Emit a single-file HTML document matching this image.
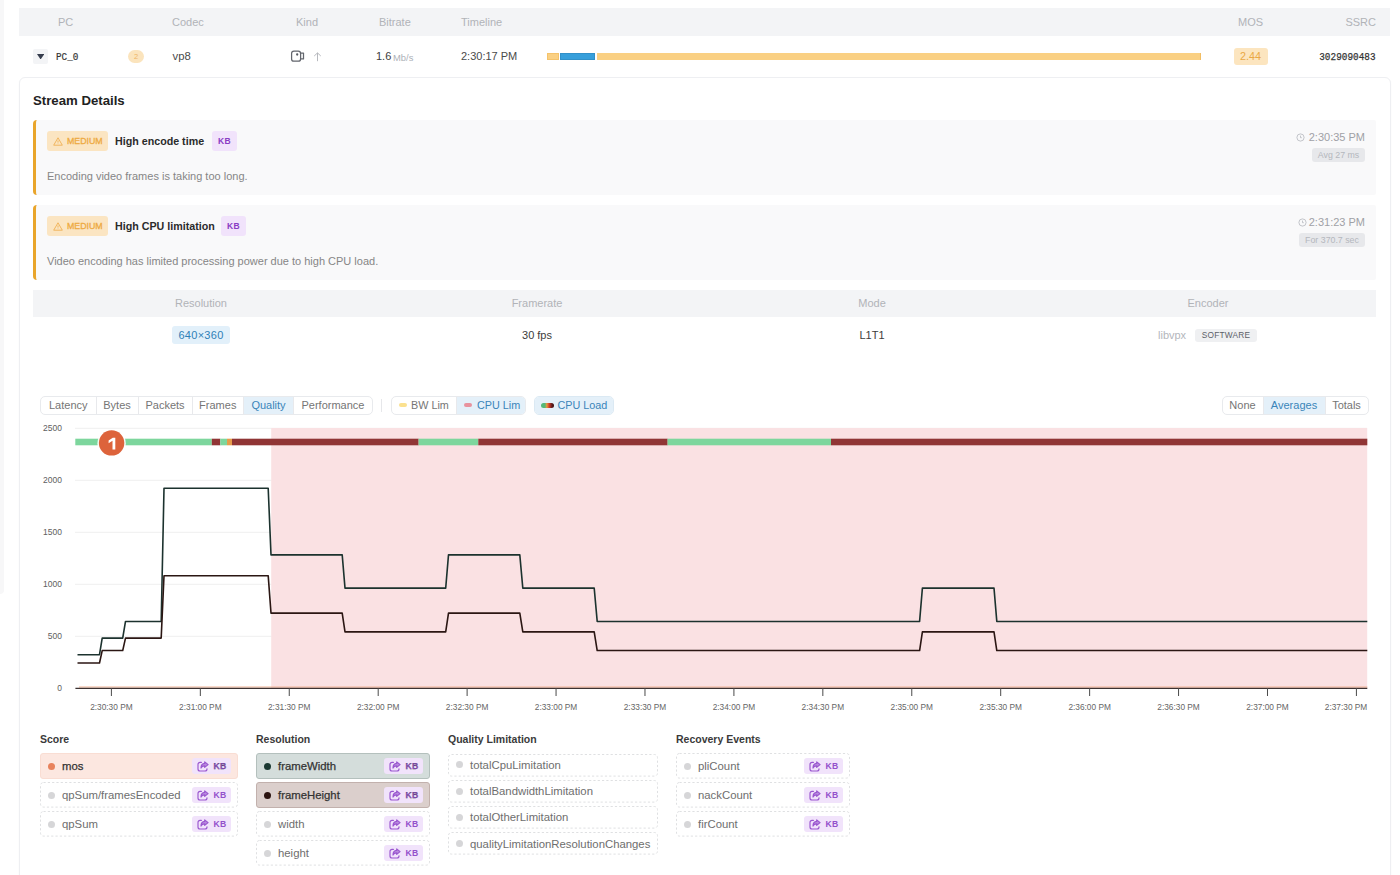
<!DOCTYPE html>
<html>
<head>
<meta charset="utf-8">
<title>Stream Details</title>
<style>
*{box-sizing:border-box;margin:0;padding:0}
html,body{width:1400px;height:875px;overflow:hidden;background:#fff}
body{font-family:"Liberation Sans",sans-serif;position:relative;color:#333;font-size:11px}
.abs{position:absolute}
.t{position:absolute;white-space:nowrap;line-height:1}
.mono{font-family:"Liberation Mono",monospace}
#strip{left:0;top:0;width:4px;height:594px;background:#f7f7f8;border-radius:0 0 4px 0}
#hdr{left:19px;top:8px;width:1371px;height:28px;background:#f3f4f6}
.hl{color:#b1b3b8;font-size:11px}
#card{left:19px;top:77px;width:1372px;height:820px;border:1px solid #eeeff2;border-radius:6px;background:#fff;box-shadow:0 1px 2px rgba(0,0,0,.03)}
.alert{left:33px;width:1343px;height:75px;background:#f9f9fa;border-left:3.5px solid #e9a52b;border-radius:4px 2px 2px 4px}
.badge{position:absolute;border-radius:3px;white-space:nowrap}
.med{background:#fbe5c2;color:#eda63a;font-size:9px;height:20.5px;width:61px}
.kb{background:#f1e3fb;color:#8a3cc4;font-weight:bold;font-size:8.5px;letter-spacing:.3px;text-align:center}
.tbl-h{left:33px;top:290px;width:1343px;height:27px;background:#f3f4f6}
.grp{position:absolute;height:18.6px;border:1px solid #e8eaed;border-radius:5px;background:#fff;overflow:hidden}
.grp span{position:absolute;top:0;height:17px;line-height:16.6px;font-size:11px;color:#757575;text-align:center;border-left:1px solid #e8e9ec}
.grp span:first-child{border-left:none}
.grp span.on{background:#e4f0f9;color:#3a85b9}
.li{position:absolute;border:1px solid transparent;border-radius:3px;height:25.6px;font-size:11.35px;color:#6e6e6e}
.li.s{height:22.6px}
.li .bd{position:absolute;left:-1px;top:-1px;width:calc(100% + 2px);height:calc(100% + 2px);overflow:visible}
.li .d{position:absolute;left:7.3px;top:8.3px;width:7px;height:7px;border-radius:50%;background:#d6d6d8}
.li.s .d{top:6.9px}
.li .n{position:absolute;left:21px;top:.9px;line-height:23.8px;white-space:nowrap}
.li.s .n{top:.6px;line-height:20.4px}
.li .kb{position:absolute;right:5.9px;top:3.8px;width:39px;height:16px;line-height:16px;border-radius:3px;padding-left:21.5px;text-align:left;font-size:8.6px;letter-spacing:.2px;color:#9450cb}
.li .kb svg{position:absolute;left:5px;top:2.8px}
.lh{position:absolute;font-weight:bold;font-size:10.5px;color:#3a3a3a;white-space:nowrap;line-height:1}
.ax{font-family:"Liberation Sans",sans-serif;font-size:9px;fill:#666}
.ay{font-family:"Liberation Sans",sans-serif;font-size:8.5px;fill:#606060}
.mk{font-family:"Liberation Sans",sans-serif;font-weight:bold;font-size:16.5px;fill:#fff}
</style>
</head>
<body>
<div id="strip" class="abs"></div>
<div id="hdr" class="abs"></div>
<!-- header labels -->
<div class="t hl" style="left:58px;top:17px">PC</div>
<div class="t hl" style="left:172px;top:17px">Codec</div>
<div class="t hl" style="left:296px;top:17px">Kind</div>
<div class="t hl" style="left:379px;top:17px">Bitrate</div>
<div class="t hl" style="left:461px;top:17px">Timeline</div>
<div class="t hl" style="left:1238px;top:17px">MOS</div>
<div class="t hl" style="right:24px;top:17px">SSRC</div>
<!-- row -->
<div class="abs" style="left:32.5px;top:48.5px;width:15px;height:15px;background:#f3f4f6;border-radius:2px"></div>
<svg class="abs" style="left:37.3px;top:53.8px" width="7.2" height="5.6" viewBox="0 0 8 6"><path d="M0 0H8L4 6Z" fill="#363d4d"/></svg>
<div class="t mono" style="left:55.5px;top:52.2px;font-size:11px;color:#333;-webkit-text-stroke:.2px #333;transform:scaleX(.85);transform-origin:0 0">PC_0</div>
<div class="abs" style="left:128px;top:49.5px;width:16px;height:13px;border-radius:6.5px;background:#fbe4bd;color:#eeb465;font-size:7.5px;text-align:center;line-height:13px">2</div>
<div class="t" style="left:172.5px;top:51.4px;font-size:11.3px;color:#4a4a4a">vp8</div>
<svg class="abs" style="left:290px;top:50.1px" width="15" height="12" viewBox="0 0 15 12" fill="none" stroke="#63666d" stroke-width="1.25"><rect x="1.6" y="1.2" width="9" height="10" rx="2.3"/><path d="M10.6 3.1H13.5V8.9H10.6" stroke-linejoin="round"/><circle cx="7.2" cy="4.5" r="1.15" fill="#55585f" stroke="none"/></svg>
<svg class="abs" style="left:313px;top:51.8px" width="9" height="10" viewBox="0 0 9 10" fill="none" stroke="#b7b9be" stroke-width="1"><path d="M4.5 9.2V.9M1.2 4L4.5 .9L7.8 4"/></svg>
<div class="t" style="left:376px;top:51px;font-size:11px;color:#3c3c3c">1.6</div>
<div class="t" style="left:393px;top:52.5px;font-size:9.4px;color:#adb1b8">Mb/s</div>
<div class="t" style="left:461px;top:51px;font-size:11px;color:#4a4a4a">2:30:17 PM</div>
<!-- timeline bar -->
<div class="abs" style="left:546.8px;top:52.9px;width:654.5px;height:6.8px;background:#fad083"></div>
<div class="abs" style="left:546.8px;top:52.9px;width:12.4px;height:6.8px;background:#fad083;border:1px solid #f4c36c"></div>
<div class="abs" style="left:1199.8px;top:52.9px;width:1.5px;height:6.8px;background:#f2bd62"></div>
<div class="abs" style="left:559.2px;top:52.4px;width:38px;height:7.8px;background:#fff"></div>
<div class="abs" style="left:560px;top:52.9px;width:35px;height:6.8px;background:#379fdb;border:1px solid #3290c8"></div>
<!-- MOS -->
<div class="abs" style="left:1233.5px;top:47.7px;width:34px;height:17px;border-radius:3px;background:#fce5bf;color:#eaa845;font-size:10.8px;text-align:center;line-height:17px">2.44</div>
<div class="t mono" style="right:24px;top:50.8px;font-size:11.6px;color:#333;-webkit-text-stroke:.25px #333;transform:scaleX(.81);transform-origin:100% 0">3029090483</div>
<div id="card" class="abs"></div>
<div class="t" style="left:33px;top:94px;font-size:13.2px;font-weight:bold;color:#222">Stream Details</div>
<!-- alert 1 -->
<div class="abs alert" style="top:120px"></div>
<div class="badge med" style="left:47px;top:130.7px"></div>
<svg class="abs" style="left:52.5px;top:136.7px" width="10" height="9" viewBox="0 0 10 9" fill="none" stroke="#efb052" stroke-width=".9"><path d="M5 .8L9.3 8.2H.7Z" stroke-linejoin="round"/><path d="M5 3.4V5.6M5 6.6V7"/></svg>
<div class="t" style="left:67px;top:137.3px;font-size:8.8px;color:#eeaa42;-webkit-text-stroke:.3px #eeaa42">MEDIUM</div>
<div class="t" style="left:115px;top:135.8px;font-size:10.7px;font-weight:bold;color:#2b2b2b">High encode time</div>
<div class="badge kb" style="left:212px;top:130.7px;width:25px;height:20.5px;line-height:20.5px">KB</div>
<div class="t" style="left:47px;top:171px;font-size:11px;color:#868686">Encoding video frames is taking too long.</div>
<svg class="abs" style="left:1296px;top:132.8px" width="9" height="9" viewBox="0 0 9 9" fill="none" stroke="#b5b8be" stroke-width=".8"><circle cx="4.5" cy="4.5" r="3.6"/><path d="M4.5 2.6V4.7H5.8"/></svg>
<div class="t" style="right:35px;top:131.8px;font-size:11px;color:#9fa1a6">2:30:35 PM</div>
<div class="badge" style="left:1312px;top:148px;width:53px;height:14px;background:#e7e8eb;color:#b4b7bd;font-size:8.8px;line-height:14px;text-align:center">Avg 27 ms</div>
<!-- alert 2 -->
<div class="abs alert" style="top:205px"></div>
<div class="badge med" style="left:47px;top:215.7px"></div>
<svg class="abs" style="left:52.5px;top:221.7px" width="10" height="9" viewBox="0 0 10 9" fill="none" stroke="#efb052" stroke-width=".9"><path d="M5 .8L9.3 8.2H.7Z" stroke-linejoin="round"/><path d="M5 3.4V5.6M5 6.6V7"/></svg>
<div class="t" style="left:67px;top:222.3px;font-size:8.8px;color:#eeaa42;-webkit-text-stroke:.3px #eeaa42">MEDIUM</div>
<div class="t" style="left:115px;top:220.8px;font-size:10.7px;font-weight:bold;color:#2b2b2b">High CPU limitation</div>
<div class="badge kb" style="left:221px;top:215.7px;width:25px;height:20.5px;line-height:20.5px">KB</div>
<div class="t" style="left:47px;top:256px;font-size:11px;color:#868686">Video encoding has limited processing power due to high CPU load.</div>
<svg class="abs" style="left:1298px;top:217.8px" width="9" height="9" viewBox="0 0 9 9" fill="none" stroke="#b5b8be" stroke-width=".8"><circle cx="4.5" cy="4.5" r="3.6"/><path d="M4.5 2.6V4.7H5.8"/></svg>
<div class="t" style="right:35px;top:216.8px;font-size:11px;color:#9fa1a6">2:31:23 PM</div>
<div class="badge" style="left:1299px;top:233px;width:66px;height:14px;background:#e7e8eb;color:#b4b7bd;font-size:8.8px;line-height:14px;text-align:center">For 370.7 sec</div>
<!-- table -->
<div class="abs tbl-h"></div>
<div class="t hl" style="left:33px;width:336px;text-align:center;top:298px">Resolution</div>
<div class="t hl" style="left:369px;width:336px;text-align:center;top:298px">Framerate</div>
<div class="t hl" style="left:704px;width:336px;text-align:center;top:298px">Mode</div>
<div class="t hl" style="left:1040px;width:336px;text-align:center;top:298px">Encoder</div>
<div class="badge" style="left:172px;top:326px;width:58px;height:18px;background:#e2f0fa;color:#2f80b7;font-size:11px;line-height:18px;text-align:center;letter-spacing:.3px">640×360</div>
<div class="t" style="left:369px;width:336px;text-align:center;top:330px;font-size:11px;color:#3c3c3c">30 fps</div>
<div class="t" style="left:704px;width:336px;text-align:center;top:330px;font-size:11px;color:#3c3c3c">L1T1</div>
<div class="t" style="left:1158px;top:330px;font-size:11px;color:#b3b6bc">libvpx</div>
<div class="badge" style="left:1195px;top:329px;width:62px;height:13px;background:#eff0f2;color:#5c6068;font-size:8.3px;line-height:13px;text-align:center;letter-spacing:.2px">SOFTWARE</div>
<!-- toolbar -->
<div class="grp" style="left:40px;top:396px;width:333px">
<span style="left:0;width:54.5px">Latency</span><span style="left:54.5px;width:42px">Bytes</span><span style="left:96.5px;width:54px">Packets</span><span style="left:150.5px;width:51.5px">Frames</span><span class="on" style="left:202px;width:50px">Quality</span><span style="left:252px;width:79px">Performance</span>
</div>
<div class="abs" style="left:381px;top:399px;width:1px;height:13px;background:#e6e7ea"></div>
<div class="grp" style="left:391px;top:396px;font-size:10.8px;width:135px">
<span style="left:0;width:64px;text-align:left;padding-left:19px;font-size:10.8px">BW Lim</span><span class="on" style="left:64px;width:69px;text-align:left;padding-left:20px;font-size:10.8px">CPU Lim</span>
</div>
<div class="abs" style="left:399px;top:403.2px;width:8px;height:4px;border-radius:2px;background:#fbe18f"></div>
<div class="abs" style="left:464px;top:403.2px;width:8px;height:4px;border-radius:2px;background:#e8929e"></div>
<div class="grp" style="left:534px;top:396px;width:80px;border-color:#dbe9f3">
<span class="on" style="left:0;width:78px;text-align:left;padding-left:22.5px;font-size:10.8px">CPU Load</span>
</div>
<div class="abs" style="left:541px;top:402.8px;width:12.5px;height:5px;border-radius:2.5px;background:linear-gradient(90deg,#55b97a 0%,#55b97a 30%,#e89a3c 45%,#d6402f 62%,#5a1a1a 85%,#3a1212 100%)"></div>
<div class="grp" style="left:1221.5px;top:396px;width:147px">
<span style="left:0;width:40px">None</span><span class="on" style="left:40px;width:62px">Averages</span><span style="left:102px;width:43px">Totals</span>
</div>
<!--CHART-START-->
<svg class="abs" style="left:0;top:420px" width="1400" height="300" viewBox="0 420 1400 300">
<line x1="75" x2="1367" y1="428.3" y2="428.3" stroke="#efefef" stroke-width="1"/>
<line x1="75" x2="1367" y1="480.3" y2="480.3" stroke="#efefef" stroke-width="1"/>
<line x1="75" x2="1367" y1="532.3" y2="532.3" stroke="#efefef" stroke-width="1"/>
<line x1="75" x2="1367" y1="584.3" y2="584.3" stroke="#efefef" stroke-width="1"/>
<line x1="75" x2="1367" y1="636.3" y2="636.3" stroke="#efefef" stroke-width="1"/>
<rect x="271.2" y="428" width="1096" height="260" fill="#fae1e3"/>
<rect x="75.3" y="438.7" width="136.5" height="6.6" fill="#7dd69d"/>
<rect x="211.8" y="438.7" width="8.5" height="6.6" fill="#903535"/>
<rect x="220.3" y="438.7" width="6.7" height="6.6" fill="#7dd69d"/>
<rect x="227" y="438.7" width="5" height="6.6" fill="#e69c4b"/>
<rect x="232" y="438.7" width="186.6" height="6.6" fill="#903535"/>
<rect x="418.6" y="438.7" width="59.7" height="6.6" fill="#7dd69d"/>
<rect x="478.3" y="438.7" width="189.3" height="6.6" fill="#903535"/>
<rect x="667.6" y="438.7" width="163.4" height="6.6" fill="#7dd69d"/>
<rect x="831" y="438.7" width="536.3" height="6.6" fill="#903535"/>
<path d="M77.5 654.72 L99.5 654.72 L102.2 638.08 L122.7 638.08 L125.5 621.44 L161.2 621.44 L164 488.32 L268.2 488.32 L271 554.88 L342.2 554.88 L345 588.16 L445.7 588.16 L448.5 554.88 L519.8 554.88 L522.8 588.16 L594.2 588.16 L597.2 621.44 L919.6 621.44 L922.4 588.16 L994 588.16 L996.8 621.44 L1367.3 621.44" fill="none" stroke="#1c322e" stroke-width="1.6" stroke-linejoin="round"/>
<path d="M77.5 663.04 L99.5 663.04 L102.2 650.56 L122.7 650.56 L125.5 638.08 L161.2 638.08 L164 575.68 L268.2 575.68 L271 613.12 L342.2 613.12 L345 631.84 L445.7 631.84 L448.5 613.12 L519.8 613.12 L522.8 631.84 L594.2 631.84 L597.2 650.56 L919.6 650.56 L922.4 631.84 L994 631.84 L996.8 650.56 L1367.3 650.56" fill="none" stroke="#2b1613" stroke-width="1.6" stroke-linejoin="round"/>
<line x1="79" x2="1367.3" y1="687.0" y2="687.0" stroke="#f2b394" stroke-width="1"/>
<line x1="75.4" x2="1367.3" y1="688.3" y2="688.3" stroke="#3c3232" stroke-width="1.3"/>
<line x1="111.4" x2="111.4" y1="688" y2="696" stroke="#4a4a4a" stroke-width="1"/>
<text x="111.4" y="710.2" text-anchor="middle" textLength="42.5" lengthAdjust="spacingAndGlyphs" class="ax">2:30:30 PM</text>
<line x1="200.33" x2="200.33" y1="688" y2="696" stroke="#4a4a4a" stroke-width="1"/>
<text x="200.33" y="710.2" text-anchor="middle" textLength="42.5" lengthAdjust="spacingAndGlyphs" class="ax">2:31:00 PM</text>
<line x1="289.26" x2="289.26" y1="688" y2="696" stroke="#4a4a4a" stroke-width="1"/>
<text x="289.26" y="710.2" text-anchor="middle" textLength="42.5" lengthAdjust="spacingAndGlyphs" class="ax">2:31:30 PM</text>
<line x1="378.19" x2="378.19" y1="688" y2="696" stroke="#4a4a4a" stroke-width="1"/>
<text x="378.19" y="710.2" text-anchor="middle" textLength="42.5" lengthAdjust="spacingAndGlyphs" class="ax">2:32:00 PM</text>
<line x1="467.12" x2="467.12" y1="688" y2="696" stroke="#4a4a4a" stroke-width="1"/>
<text x="467.12" y="710.2" text-anchor="middle" textLength="42.5" lengthAdjust="spacingAndGlyphs" class="ax">2:32:30 PM</text>
<line x1="556.05" x2="556.05" y1="688" y2="696" stroke="#4a4a4a" stroke-width="1"/>
<text x="556.05" y="710.2" text-anchor="middle" textLength="42.5" lengthAdjust="spacingAndGlyphs" class="ax">2:33:00 PM</text>
<line x1="644.98" x2="644.98" y1="688" y2="696" stroke="#4a4a4a" stroke-width="1"/>
<text x="644.98" y="710.2" text-anchor="middle" textLength="42.5" lengthAdjust="spacingAndGlyphs" class="ax">2:33:30 PM</text>
<line x1="733.91" x2="733.91" y1="688" y2="696" stroke="#4a4a4a" stroke-width="1"/>
<text x="733.91" y="710.2" text-anchor="middle" textLength="42.5" lengthAdjust="spacingAndGlyphs" class="ax">2:34:00 PM</text>
<line x1="822.84" x2="822.84" y1="688" y2="696" stroke="#4a4a4a" stroke-width="1"/>
<text x="822.84" y="710.2" text-anchor="middle" textLength="42.5" lengthAdjust="spacingAndGlyphs" class="ax">2:34:30 PM</text>
<line x1="911.77" x2="911.77" y1="688" y2="696" stroke="#4a4a4a" stroke-width="1"/>
<text x="911.77" y="710.2" text-anchor="middle" textLength="42.5" lengthAdjust="spacingAndGlyphs" class="ax">2:35:00 PM</text>
<line x1="1000.7" x2="1000.7" y1="688" y2="696" stroke="#4a4a4a" stroke-width="1"/>
<text x="1000.7" y="710.2" text-anchor="middle" textLength="42.5" lengthAdjust="spacingAndGlyphs" class="ax">2:35:30 PM</text>
<line x1="1089.63" x2="1089.63" y1="688" y2="696" stroke="#4a4a4a" stroke-width="1"/>
<text x="1089.63" y="710.2" text-anchor="middle" textLength="42.5" lengthAdjust="spacingAndGlyphs" class="ax">2:36:00 PM</text>
<line x1="1178.56" x2="1178.56" y1="688" y2="696" stroke="#4a4a4a" stroke-width="1"/>
<text x="1178.56" y="710.2" text-anchor="middle" textLength="42.5" lengthAdjust="spacingAndGlyphs" class="ax">2:36:30 PM</text>
<line x1="1267.49" x2="1267.49" y1="688" y2="696" stroke="#4a4a4a" stroke-width="1"/>
<text x="1267.49" y="710.2" text-anchor="middle" textLength="42.5" lengthAdjust="spacingAndGlyphs" class="ax">2:37:00 PM</text>
<line x1="1356.42" x2="1356.42" y1="688" y2="696" stroke="#4a4a4a" stroke-width="1"/>
<text x="1367.3" y="710.2" text-anchor="end" textLength="42.5" lengthAdjust="spacingAndGlyphs" class="ax">2:37:30 PM</text>
<text x="62" y="431.2" text-anchor="end" class="ay">2500</text>
<text x="62" y="483.2" text-anchor="end" class="ay">2000</text>
<text x="62" y="535.2" text-anchor="end" class="ay">1500</text>
<text x="62" y="587.2" text-anchor="end" class="ay">1000</text>
<text x="62" y="639.2" text-anchor="end" class="ay">500</text>
<text x="62" y="691.2" text-anchor="end" class="ay">0</text>
<circle cx="111.6" cy="443.2" r="14.2" fill="#fff" opacity=".9"/>
<circle cx="111.6" cy="442.9" r="12.7" fill="#dd633b"/>
<path d="M115.3 437.8V449.6H112.5V440.8L108.6 443.2V440.5L112.8 437.8Z" fill="#fff"/>
</svg>
<!--CHART-END-->
<!-- legend -->
<div class="lh" style="left:40px;top:734px">Score</div>
<div class="li" style="left:40px;top:753.3px;width:198px;background:#fce7e0;border:1px solid #f9ddd3;color:#333;-webkit-text-stroke:.25px #333"><i class="d" style="background:#e8825c"></i><span class="n">mos</span><b class="kb"><svg width="12" height="11" viewBox="0 0 12 11" fill="none" stroke="#9a57cf" stroke-width="1.15" stroke-linecap="round" stroke-linejoin="round"><path d="M4.4 1.4H3A2 2 0 0 0 1 3.4V8A2 2 0 0 0 3 10H8A2 2 0 0 0 10 8V7.7"/><path d="M7.7 .9L11.1 3.6L7.7 6.3V4.8C5.7 4.8 4.5 5.6 4 7.1C4 4.6 5.4 2.6 7.7 2.4Z" fill="#b98ade"/></svg>KB</b></div>
<div class="li" style="left:40px;top:782.3px;width:198px"><svg class="bd"><rect x=".5" y=".5" width="100%" height="100%" rx="3" fill="none" stroke="#dfe0e2" stroke-dasharray="2.2 2.1" style="width:calc(100% - 1px);height:calc(100% - 1px)"/></svg><i class="d"></i><span class="n">qpSum/framesEncoded</span><b class="kb"><svg width="12" height="11" viewBox="0 0 12 11" fill="none" stroke="#9a57cf" stroke-width="1.15" stroke-linecap="round" stroke-linejoin="round"><path d="M4.4 1.4H3A2 2 0 0 0 1 3.4V8A2 2 0 0 0 3 10H8A2 2 0 0 0 10 8V7.7"/><path d="M7.7 .9L11.1 3.6L7.7 6.3V4.8C5.7 4.8 4.5 5.6 4 7.1C4 4.6 5.4 2.6 7.7 2.4Z" fill="#b98ade"/></svg>KB</b></div>
<div class="li" style="left:40px;top:811.3px;width:198px"><svg class="bd"><rect x=".5" y=".5" width="100%" height="100%" rx="3" fill="none" stroke="#dfe0e2" stroke-dasharray="2.2 2.1" style="width:calc(100% - 1px);height:calc(100% - 1px)"/></svg><i class="d"></i><span class="n">qpSum</span><b class="kb"><svg width="12" height="11" viewBox="0 0 12 11" fill="none" stroke="#9a57cf" stroke-width="1.15" stroke-linecap="round" stroke-linejoin="round"><path d="M4.4 1.4H3A2 2 0 0 0 1 3.4V8A2 2 0 0 0 3 10H8A2 2 0 0 0 10 8V7.7"/><path d="M7.7 .9L11.1 3.6L7.7 6.3V4.8C5.7 4.8 4.5 5.6 4 7.1C4 4.6 5.4 2.6 7.7 2.4Z" fill="#b98ade"/></svg>KB</b></div>
<div class="lh" style="left:256px;top:734px">Resolution</div>
<div class="li" style="left:256px;top:753.3px;width:174px;background:#d4dddb;border:1px solid #b4c0bd;color:#333;-webkit-text-stroke:.25px #333"><i class="d" style="background:#1c3a33"></i><span class="n">frameWidth</span><b class="kb"><svg width="12" height="11" viewBox="0 0 12 11" fill="none" stroke="#9a57cf" stroke-width="1.15" stroke-linecap="round" stroke-linejoin="round"><path d="M4.4 1.4H3A2 2 0 0 0 1 3.4V8A2 2 0 0 0 3 10H8A2 2 0 0 0 10 8V7.7"/><path d="M7.7 .9L11.1 3.6L7.7 6.3V4.8C5.7 4.8 4.5 5.6 4 7.1C4 4.6 5.4 2.6 7.7 2.4Z" fill="#b98ade"/></svg>KB</b></div>
<div class="li" style="left:256px;top:782.3px;width:174px;background:#dbcfcc;border:1px solid #c2b1ad;color:#333;-webkit-text-stroke:.25px #333"><i class="d" style="background:#2b1310"></i><span class="n">frameHeight</span><b class="kb"><svg width="12" height="11" viewBox="0 0 12 11" fill="none" stroke="#9a57cf" stroke-width="1.15" stroke-linecap="round" stroke-linejoin="round"><path d="M4.4 1.4H3A2 2 0 0 0 1 3.4V8A2 2 0 0 0 3 10H8A2 2 0 0 0 10 8V7.7"/><path d="M7.7 .9L11.1 3.6L7.7 6.3V4.8C5.7 4.8 4.5 5.6 4 7.1C4 4.6 5.4 2.6 7.7 2.4Z" fill="#b98ade"/></svg>KB</b></div>
<div class="li" style="left:256px;top:811.3px;width:174px"><svg class="bd"><rect x=".5" y=".5" width="100%" height="100%" rx="3" fill="none" stroke="#dfe0e2" stroke-dasharray="2.2 2.1" style="width:calc(100% - 1px);height:calc(100% - 1px)"/></svg><i class="d"></i><span class="n">width</span><b class="kb"><svg width="12" height="11" viewBox="0 0 12 11" fill="none" stroke="#9a57cf" stroke-width="1.15" stroke-linecap="round" stroke-linejoin="round"><path d="M4.4 1.4H3A2 2 0 0 0 1 3.4V8A2 2 0 0 0 3 10H8A2 2 0 0 0 10 8V7.7"/><path d="M7.7 .9L11.1 3.6L7.7 6.3V4.8C5.7 4.8 4.5 5.6 4 7.1C4 4.6 5.4 2.6 7.7 2.4Z" fill="#b98ade"/></svg>KB</b></div>
<div class="li" style="left:256px;top:840.3px;width:174px"><svg class="bd"><rect x=".5" y=".5" width="100%" height="100%" rx="3" fill="none" stroke="#dfe0e2" stroke-dasharray="2.2 2.1" style="width:calc(100% - 1px);height:calc(100% - 1px)"/></svg><i class="d"></i><span class="n">height</span><b class="kb"><svg width="12" height="11" viewBox="0 0 12 11" fill="none" stroke="#9a57cf" stroke-width="1.15" stroke-linecap="round" stroke-linejoin="round"><path d="M4.4 1.4H3A2 2 0 0 0 1 3.4V8A2 2 0 0 0 3 10H8A2 2 0 0 0 10 8V7.7"/><path d="M7.7 .9L11.1 3.6L7.7 6.3V4.8C5.7 4.8 4.5 5.6 4 7.1C4 4.6 5.4 2.6 7.7 2.4Z" fill="#b98ade"/></svg>KB</b></div>
<div class="lh" style="left:448px;top:734px">Quality Limitation</div>
<div class="li s" style="left:448px;top:753.5px;width:210px"><svg class="bd"><rect x=".5" y=".5" width="100%" height="100%" rx="3" fill="none" stroke="#dfe0e2" stroke-dasharray="2.2 2.1" style="width:calc(100% - 1px);height:calc(100% - 1px)"/></svg><i class="d"></i><span class="n">totalCpuLimitation</span></div>
<div class="li s" style="left:448px;top:779.7px;width:210px"><svg class="bd"><rect x=".5" y=".5" width="100%" height="100%" rx="3" fill="none" stroke="#dfe0e2" stroke-dasharray="2.2 2.1" style="width:calc(100% - 1px);height:calc(100% - 1px)"/></svg><i class="d"></i><span class="n">totalBandwidthLimitation</span></div>
<div class="li s" style="left:448px;top:805.9px;width:210px"><svg class="bd"><rect x=".5" y=".5" width="100%" height="100%" rx="3" fill="none" stroke="#dfe0e2" stroke-dasharray="2.2 2.1" style="width:calc(100% - 1px);height:calc(100% - 1px)"/></svg><i class="d"></i><span class="n">totalOtherLimitation</span></div>
<div class="li s" style="left:448px;top:832.1px;width:210px"><svg class="bd"><rect x=".5" y=".5" width="100%" height="100%" rx="3" fill="none" stroke="#dfe0e2" stroke-dasharray="2.2 2.1" style="width:calc(100% - 1px);height:calc(100% - 1px)"/></svg><i class="d"></i><span class="n">qualityLimitationResolutionChanges</span></div>
<div class="lh" style="left:676px;top:734px">Recovery Events</div>
<div class="li" style="left:676px;top:753.3px;width:174px"><svg class="bd"><rect x=".5" y=".5" width="100%" height="100%" rx="3" fill="none" stroke="#dfe0e2" stroke-dasharray="2.2 2.1" style="width:calc(100% - 1px);height:calc(100% - 1px)"/></svg><i class="d"></i><span class="n">pliCount</span><b class="kb"><svg width="12" height="11" viewBox="0 0 12 11" fill="none" stroke="#9a57cf" stroke-width="1.15" stroke-linecap="round" stroke-linejoin="round"><path d="M4.4 1.4H3A2 2 0 0 0 1 3.4V8A2 2 0 0 0 3 10H8A2 2 0 0 0 10 8V7.7"/><path d="M7.7 .9L11.1 3.6L7.7 6.3V4.8C5.7 4.8 4.5 5.6 4 7.1C4 4.6 5.4 2.6 7.7 2.4Z" fill="#b98ade"/></svg>KB</b></div>
<div class="li" style="left:676px;top:782.3px;width:174px"><svg class="bd"><rect x=".5" y=".5" width="100%" height="100%" rx="3" fill="none" stroke="#dfe0e2" stroke-dasharray="2.2 2.1" style="width:calc(100% - 1px);height:calc(100% - 1px)"/></svg><i class="d"></i><span class="n">nackCount</span><b class="kb"><svg width="12" height="11" viewBox="0 0 12 11" fill="none" stroke="#9a57cf" stroke-width="1.15" stroke-linecap="round" stroke-linejoin="round"><path d="M4.4 1.4H3A2 2 0 0 0 1 3.4V8A2 2 0 0 0 3 10H8A2 2 0 0 0 10 8V7.7"/><path d="M7.7 .9L11.1 3.6L7.7 6.3V4.8C5.7 4.8 4.5 5.6 4 7.1C4 4.6 5.4 2.6 7.7 2.4Z" fill="#b98ade"/></svg>KB</b></div>
<div class="li" style="left:676px;top:811.3px;width:174px"><svg class="bd"><rect x=".5" y=".5" width="100%" height="100%" rx="3" fill="none" stroke="#dfe0e2" stroke-dasharray="2.2 2.1" style="width:calc(100% - 1px);height:calc(100% - 1px)"/></svg><i class="d"></i><span class="n">firCount</span><b class="kb"><svg width="12" height="11" viewBox="0 0 12 11" fill="none" stroke="#9a57cf" stroke-width="1.15" stroke-linecap="round" stroke-linejoin="round"><path d="M4.4 1.4H3A2 2 0 0 0 1 3.4V8A2 2 0 0 0 3 10H8A2 2 0 0 0 10 8V7.7"/><path d="M7.7 .9L11.1 3.6L7.7 6.3V4.8C5.7 4.8 4.5 5.6 4 7.1C4 4.6 5.4 2.6 7.7 2.4Z" fill="#b98ade"/></svg>KB</b></div>
</body>
</html>
